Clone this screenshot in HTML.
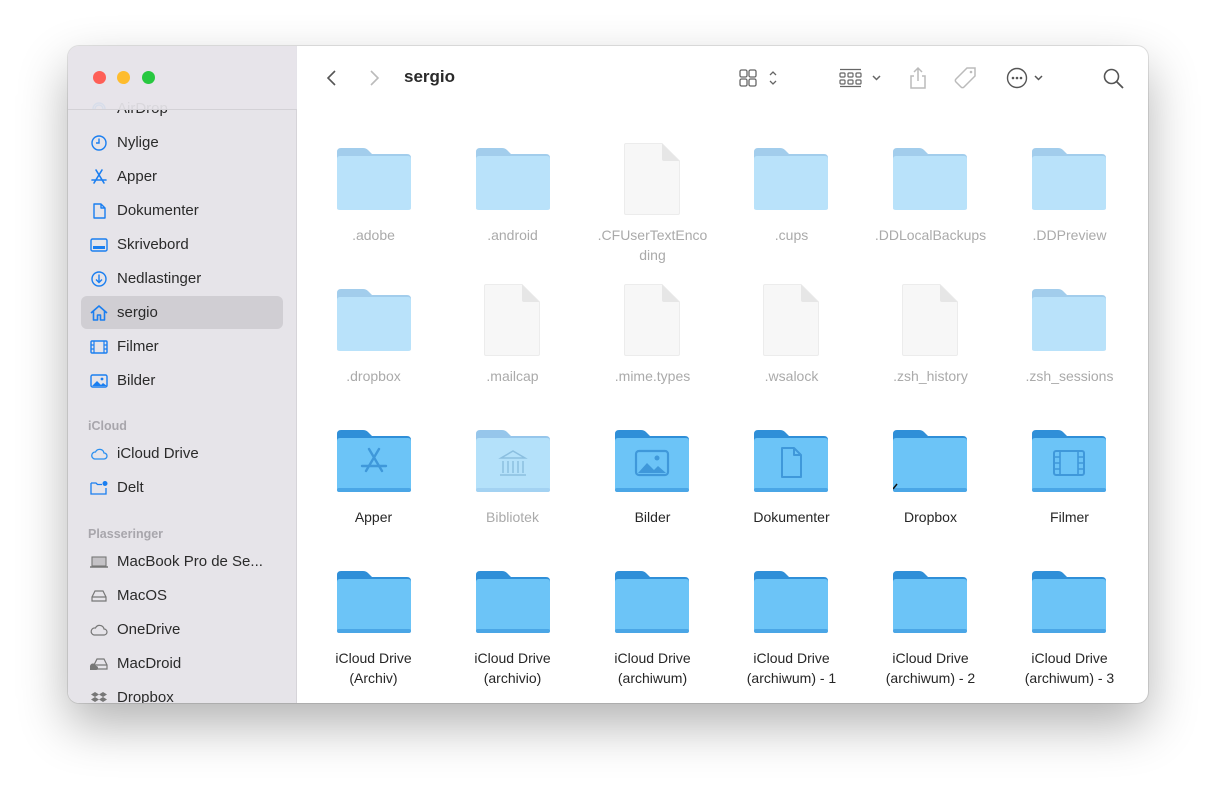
<!DOCTYPE html>
<html><head><meta charset="utf-8"><style>
*{margin:0;padding:0;box-sizing:border-box}
body{width:1216px;height:793px;background:#fff;position:relative;overflow:hidden;font-family:"Liberation Sans",sans-serif}
.win{position:absolute;left:68px;top:46px;width:1080px;height:657px;border-radius:11px;background:#fff;overflow:hidden;box-shadow:0 22px 50px rgba(0,0,0,.30),0 0 0 1px rgba(0,0,0,.10)}
.side{position:absolute;left:0;top:0;width:229px;height:657px;background:#e6e4e9;border-right:1px solid #d6d4d9}
.sbar{position:absolute;left:0;top:0;width:229px;height:64px;background:rgba(230,228,233,.93);border-bottom:1px solid #d3d1d6;z-index:2}
.dot{position:absolute;top:25px;width:13px;height:13px;border-radius:50%}
.list{position:absolute;left:0;top:0;width:229px;height:657px}
.it{position:absolute;left:49px;font-size:15px;color:#2a2a2a;line-height:18px}
.ic{position:absolute;left:21px;width:20px;height:20px}
.hd{position:absolute;left:20px;font-size:12.5px;font-weight:bold;color:#a8a6ac}
.sel{position:absolute;left:13px;top:250px;width:202px;height:33px;background:#d0ced3;border-radius:6px}
.cell{position:absolute;width:139px;text-align:center;font-size:14px;line-height:20px;color:#aaa}
.cell.d{color:#262626}
.ti{position:absolute}
</style></head><body>
<svg width="0" height="0" style="position:absolute">
<defs>
<symbol id="fl" viewBox="0 0 74 62"><path d="M4 0H26Q29 0 31 2L35 6H70Q74 6 74 10V20H0V4Q0 0 4 0Z" fill="#a2cdec"/><path d="M3 8H71Q74 8 74 11V59Q74 62 71 62H3Q0 62 0 59V11Q0 8 3 8Z" fill="#b9e2fa"/><path d="M0 59Q0 62 3 62H71Q74 62 74 59V60Q74 62 71 62H3Q0 62 0 60Z" fill="#9fcbe8"/></symbol>
<symbol id="fd" viewBox="0 0 74 62"><path d="M4 0H26Q29 0 31 2L35 6H70Q74 6 74 10V20H0V4Q0 0 4 0Z" fill="#2f8fd8"/><path d="M3 8H71Q74 8 74 11V59Q74 62 71 62H3Q0 62 0 59V11Q0 8 3 8Z" fill="#6cc4f7"/><rect x="0" y="58" width="74" height="4" rx="2" fill="#4aa6e6"/></symbol>
<symbol id="doc" viewBox="0 0 56 72"><path d="M2 0.5H38L55.5 18V70Q55.5 71.5 54 71.5H2Q0.5 71.5 0.5 70V2Q0.5 0.5 2 0.5Z" fill="#f7f7f7" stroke="#ececec"/><path d="M38 0.5V16Q38 18 40 18H55.5Z" fill="#e6e6e6"/></symbol>
</defs></svg>

<div class="win">
 <div class="side">
  <div class="list">
   <div class="sel"></div>
   <svg class="ic" style="top:53px" viewBox="0 0 20 20"><path d="M4 10a6 6 0 0 1 12 0M6 10a4 4 0 0 1 8 0" fill="none" stroke="#1a7ef0" stroke-width="1.4"/></svg><div class="it" style="top:54px">AirDrop</div>
   <svg class="ic" style="top:87px" viewBox="0 0 20 20"><circle cx="10" cy="10" r="7" fill="none" stroke="#1a7ef0" stroke-width="1.4"/><path d="M10 5.5V10H7" fill="none" stroke="#1a7ef0" stroke-width="1.4"/></svg><div class="it" style="top:88px">Nylige</div>
   <svg class="ic" style="top:121px" viewBox="0 0 20 20"><path d="M7 3l8 13M13 3L5 16M3 13h14" fill="none" stroke="#1a7ef0" stroke-width="1.6" stroke-linecap="round"/></svg><div class="it" style="top:122px">Apper</div>
   <svg class="ic" style="top:155px" viewBox="0 0 20 20"><path d="M5 3h7l4 4v10H5z M12 3v4h4" fill="none" stroke="#1a7ef0" stroke-width="1.4" stroke-linejoin="round"/></svg><div class="it" style="top:156px">Dokumenter</div>
   <svg class="ic" style="top:189px" viewBox="0 0 20 20"><rect x="2" y="4" width="16" height="12" rx="1.5" fill="none" stroke="#1a7ef0" stroke-width="1.4"/><rect x="4" y="11" width="12" height="3" fill="#1a7ef0"/></svg><div class="it" style="top:190px">Skrivebord</div>
   <svg class="ic" style="top:223px" viewBox="0 0 20 20"><circle cx="10" cy="10" r="7" fill="none" stroke="#1a7ef0" stroke-width="1.4"/><path d="M10 5.5v8M7 10.5l3 3 3-3" fill="none" stroke="#1a7ef0" stroke-width="1.4"/></svg><div class="it" style="top:224px">Nedlastinger</div>
   <svg class="ic" style="top:257px" viewBox="0 0 20 20"><path d="M2 10L10 3l8 7M4.5 8v9h4v-5h3v5h4V8" fill="none" stroke="#1a7ef0" stroke-width="1.6" stroke-linejoin="round"/></svg><div class="it" style="top:258px">sergio</div>
   <svg class="ic" style="top:291px" viewBox="0 0 20 20"><rect x="2" y="4" width="16" height="12" rx="1" fill="none" stroke="#1a7ef0" stroke-width="1.4"/><path d="M5 4v12M15 4v12M2 8h3M2 12h3M15 8h3M15 12h3" stroke="#1a7ef0" stroke-width="1.2"/></svg><div class="it" style="top:292px">Filmer</div>
   <svg class="ic" style="top:325px" viewBox="0 0 20 20"><rect x="2" y="4" width="16" height="12" rx="1.5" fill="none" stroke="#1a7ef0" stroke-width="1.4"/><path d="M3 15l5-5 4 4 2-2 4 3z" fill="#1a7ef0"/><circle cx="13" cy="8" r="1.4" fill="#1a7ef0"/></svg><div class="it" style="top:326px">Bilder</div>
   <div class="hd" style="top:373px">iCloud</div>
   <svg class="ic" style="top:398px" viewBox="0 0 20 20"><path d="M6 15h9a3 3 0 0 0 0-6 4.5 4.5 0 0 0-8.5-1A3.5 3.5 0 0 0 6 15z" fill="none" stroke="#2a8ff0" stroke-width="1.3"/></svg><div class="it" style="top:399px">iCloud Drive</div>
   <svg class="ic" style="top:432px" viewBox="0 0 20 20"><path d="M2 5h5l1.5 1.5H13M2 5v11h15v-6" fill="none" stroke="#1a7ef0" stroke-width="1.3"/><circle cx="16" cy="5.5" r="2.5" fill="#1a7ef0"/></svg><div class="it" style="top:433px">Delt</div>
   <div class="hd" style="top:481px">Plasseringer</div>
   <svg class="ic" style="top:506px" viewBox="0 0 20 20"><rect x="3" y="5" width="14" height="9" fill="#c4c2c6" stroke="#777" stroke-width="1.1"/><path d="M1 15h18" stroke="#777" stroke-width="1.6"/></svg><div class="it" style="top:507px">MacBook Pro de Se...</div>
   <svg class="ic" style="top:540px" viewBox="0 0 20 20"><path d="M3 11l3-6h8l3 6v4H3z M3 11h14" fill="none" stroke="#777" stroke-width="1.2"/></svg><div class="it" style="top:541px">MacOS</div>
   <svg class="ic" style="top:574px" viewBox="0 0 20 20"><path d="M5 15h10a3 3 0 0 0 0-6 4.5 4.5 0 0 0-8.5-1A3.5 3.5 0 0 0 5 15z" fill="none" stroke="#777" stroke-width="1.2"/></svg><div class="it" style="top:575px">OneDrive</div>
   <svg class="ic" style="top:608px" viewBox="0 0 20 20"><path d="M5 11l3-6h7l3 6v4H7 M5 11h13" fill="none" stroke="#777" stroke-width="1.2"/><path d="M1 16h6a2 2 0 0 0 0-4 3 3 0 0 0-6 1z" fill="#777"/></svg><div class="it" style="top:609px">MacDroid</div>
   <svg class="ic" style="top:642px" viewBox="0 0 20 20"><path d="M6 4l4 2.5-4 2.5-4-2.5zM14 4l4 2.5-4 2.5-4-2.5zM6 9l4 2.5-4 2.5-4-2.5zM14 9l4 2.5-4 2.5-4-2.5z" fill="#777"/></svg><div class="it" style="top:643px">Dropbox</div>
  </div>
  <div class="sbar">
   <div class="dot" style="left:25px;background:#fe5f57"></div>
   <div class="dot" style="left:49px;background:#febc2e"></div>
   <div class="dot" style="left:74px;background:#28c840"></div>
  </div>
 </div>
 <svg class="ti" style="left:254px;top:22px" width="20" height="20" viewBox="0 0 20 20"><path d="M13 3L6 10l7 7" fill="none" stroke="#555" stroke-width="1.6"/></svg>
 <svg class="ti" style="left:296px;top:22px" width="20" height="20" viewBox="0 0 20 20"><path d="M7 3l7 7-7 7" fill="none" stroke="#bbb" stroke-width="1.6"/></svg>
 <div class="ti" style="left:336px;top:21px;font-size:17px;font-weight:bold;color:#2a2a2a">sergio</div>
 <svg class="ti" style="left:670px;top:21px" width="50" height="22" viewBox="0 0 50 22"><g fill="none" stroke="#666" stroke-width="1.3"><rect x="2" y="3" width="7" height="7" rx="1.5"/><rect x="11" y="3" width="7" height="7" rx="1.5"/><rect x="2" y="12" width="7" height="7" rx="1.5"/><rect x="11" y="12" width="7" height="7" rx="1.5"/><path d="M32 8l3-3 3 3M32 14l3 3 3-3"/></g></svg>
 <svg class="ti" style="left:770px;top:21px" width="50" height="22" viewBox="0 0 50 22"><g fill="none" stroke="#666" stroke-width="1.2"><path d="M2 2.5h21M2 19.5h21"/><rect x="2" y="6" width="5" height="4" rx="1"/><rect x="10" y="6" width="5" height="4" rx="1"/><rect x="18" y="6" width="5" height="4" rx="1"/><rect x="2" y="13" width="5" height="4" rx="1"/><rect x="10" y="13" width="5" height="4" rx="1"/><rect x="18" y="13" width="5" height="4" rx="1"/><path d="M35 9l3.5 3.5L42 9" stroke-width="1.5"/></g></svg>
 <svg class="ti" style="left:838px;top:19px" width="24" height="26" viewBox="0 0 24 26"><g fill="none" stroke="#bbb" stroke-width="1.5"><path d="M12 3v13M8 7l4-4 4 4M8 11H5v12h14V11h-3"/></g></svg>
 <svg class="ti" style="left:885px;top:19px" width="26" height="26" viewBox="0 0 26 26"><path d="M14 3h8v8L11 22a2 2 0 0 1-3 0l-5-5a2 2 0 0 1 0-3z" fill="none" stroke="#bbb" stroke-width="1.5"/><circle cx="18" cy="7" r="1.3" fill="#bbb"/></svg>
 <svg class="ti" style="left:937px;top:20px" width="46" height="24" viewBox="0 0 46 24"><circle cx="12" cy="12" r="9.5" fill="none" stroke="#555" stroke-width="1.4"/><circle cx="8" cy="12" r="1.3" fill="#555"/><circle cx="12" cy="12" r="1.3" fill="#555"/><circle cx="16" cy="12" r="1.3" fill="#555"/><path d="M30 10l3.5 3.5L37 10" fill="none" stroke="#555" stroke-width="1.5"/></svg>
 <svg class="ti" style="left:1034px;top:21px" width="24" height="24" viewBox="0 0 24 24"><circle cx="9.5" cy="9.5" r="7" fill="none" stroke="#555" stroke-width="1.6"/><path d="M14.5 14.5L21 21" stroke="#555" stroke-width="1.8"/></svg>

 <svg class="ti" style="left:269px;top:102px" width="74" height="62"><use href="#fl"/></svg>
 <svg class="ti" style="left:408px;top:102px" width="74" height="62"><use href="#fl"/></svg>
 <svg class="ti" style="left:556px;top:97px" width="56" height="72"><use href="#doc"/></svg>
 <svg class="ti" style="left:686px;top:102px" width="74" height="62"><use href="#fl"/></svg>
 <svg class="ti" style="left:825px;top:102px" width="74" height="62"><use href="#fl"/></svg>
 <svg class="ti" style="left:964px;top:102px" width="74" height="62"><use href="#fl"/></svg>
 <div class="cell" style="left:236px;top:179px">.adobe</div>
 <div class="cell" style="left:375px;top:179px">.android</div>
 <div class="cell" style="left:515px;top:179px">.CFUserTextEnco<br>ding</div>
 <div class="cell" style="left:654px;top:179px">.cups</div>
 <div class="cell" style="left:793px;top:179px">.DDLocalBackups</div>
 <div class="cell" style="left:932px;top:179px">.DDPreview</div>
 <svg class="ti" style="left:269px;top:243px" width="74" height="62"><use href="#fl"/></svg>
 <svg class="ti" style="left:416px;top:238px" width="56" height="72"><use href="#doc"/></svg>
 <svg class="ti" style="left:556px;top:238px" width="56" height="72"><use href="#doc"/></svg>
 <svg class="ti" style="left:695px;top:238px" width="56" height="72"><use href="#doc"/></svg>
 <svg class="ti" style="left:834px;top:238px" width="56" height="72"><use href="#doc"/></svg>
 <svg class="ti" style="left:964px;top:243px" width="74" height="62"><use href="#fl"/></svg>
 <div class="cell" style="left:236px;top:320px">.dropbox</div>
 <div class="cell" style="left:375px;top:320px">.mailcap</div>
 <div class="cell" style="left:515px;top:320px">.mime.types</div>
 <div class="cell" style="left:654px;top:320px">.wsalock</div>
 <div class="cell" style="left:793px;top:320px">.zsh_history</div>
 <div class="cell" style="left:932px;top:320px">.zsh_sessions</div>
 <svg class="ti" style="left:269px;top:384px" width="74" height="62"><use href="#fd"/><path d="M32 19l13 22M42 19L29 41M25 36h24" stroke="#3f98da" stroke-width="2.4" stroke-linecap="round" fill="none"/></svg>
 <svg class="ti" style="left:408px;top:384px" width="74" height="62"><g opacity=".5"><use href="#fd"/></g><g fill="none" stroke="#8bbfe0" stroke-width="1.5"><path d="M25 28l12-7 12 7z M27 31v12M32 31v12M37 31v12M42 31v12M47 31v12M24 45h26"/></g></svg>
 <svg class="ti" style="left:547px;top:384px" width="74" height="62"><use href="#fd"/><rect x="21" y="21" width="32" height="24" rx="3" fill="none" stroke="#3f98da" stroke-width="2.2"/><path d="M23 43l9-10 7 7 4-4 8 7z" fill="#3f98da"/><circle cx="42" cy="28" r="2.5" fill="#3f98da"/></svg>
 <svg class="ti" style="left:686px;top:384px" width="74" height="62"><use href="#fd"/><path d="M28 18h12l7 7v22H28z M40 18v7h7" fill="none" stroke="#3f98da" stroke-width="2" stroke-linejoin="round"/></svg>
 <svg class="ti" style="left:825px;top:384px" width="74" height="62"><use href="#fd"/><path d="M0 59l4-5" stroke="#111" stroke-width="1.5"/></svg>
 <svg class="ti" style="left:964px;top:384px" width="74" height="62"><use href="#fd"/><rect x="22" y="21" width="30" height="24" rx="2" fill="none" stroke="#3f98da" stroke-width="2"/><path d="M28 21v24M46 21v24M22 27h6M22 33h6M22 39h6M46 27h6M46 33h6M46 39h6" stroke="#3f98da" stroke-width="1.6"/></svg>
 <div class="cell d" style="left:236px;top:461px">Apper</div>
 <div class="cell" style="left:375px;top:461px">Bibliotek</div>
 <div class="cell d" style="left:515px;top:461px">Bilder</div>
 <div class="cell d" style="left:654px;top:461px">Dokumenter</div>
 <div class="cell d" style="left:793px;top:461px">Dropbox</div>
 <div class="cell d" style="left:932px;top:461px">Filmer</div>
 <svg class="ti" style="left:269px;top:525px" width="74" height="62"><use href="#fd"/></svg>
 <svg class="ti" style="left:408px;top:525px" width="74" height="62"><use href="#fd"/></svg>
 <svg class="ti" style="left:547px;top:525px" width="74" height="62"><use href="#fd"/></svg>
 <svg class="ti" style="left:686px;top:525px" width="74" height="62"><use href="#fd"/></svg>
 <svg class="ti" style="left:825px;top:525px" width="74" height="62"><use href="#fd"/></svg>
 <svg class="ti" style="left:964px;top:525px" width="74" height="62"><use href="#fd"/></svg>
 <div class="cell d" style="left:236px;top:602px">iCloud Drive<br>(Archiv)</div>
 <div class="cell d" style="left:375px;top:602px">iCloud Drive<br>(archivio)</div>
 <div class="cell d" style="left:515px;top:602px">iCloud Drive<br>(archiwum)</div>
 <div class="cell d" style="left:654px;top:602px">iCloud Drive<br>(archiwum) - 1</div>
 <div class="cell d" style="left:793px;top:602px">iCloud Drive<br>(archiwum) - 2</div>
 <div class="cell d" style="left:932px;top:602px">iCloud Drive<br>(archiwum) - 3</div>
</div>
</body></html>
